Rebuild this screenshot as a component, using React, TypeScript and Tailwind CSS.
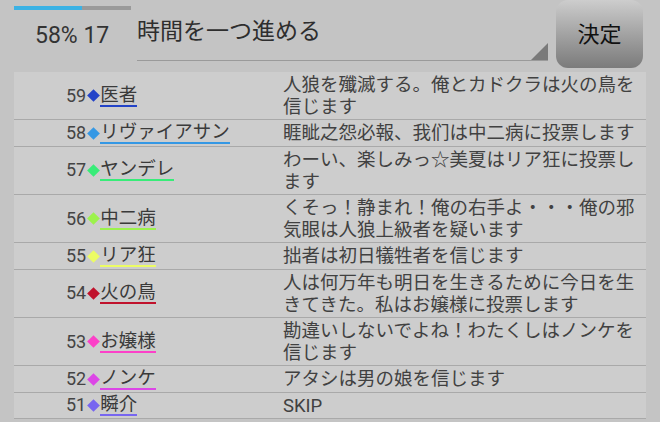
import React from "react";

type Entry = { no: number; name: string; color: string; msg: string };

const entries: Entry[] = [
  { no: 59, name: "医者", color: "#2343c8", msg: "人狼を殲滅する。俺とカドクラは火の鳥を信じます" },
  { no: 58, name: "リヴァイアサン", color: "#3598e4", msg: "睚眦之怨必報、我们は中二病に投票します" },
  { no: 57, name: "ヤンデレ", color: "#38ec78", msg: "わーい、楽しみっ☆美夏はリア狂に投票します" },
  { no: 56, name: "中二病", color: "#9cf24c", msg: "くそっ！静まれ！俺の右手よ・・・俺の邪気眼は人狼上級者を疑います" },
  { no: 55, name: "リア狂", color: "#ecfc64", msg: "拙者は初日犠牲者を信じます" },
  { no: 54, name: "火の鳥", color: "#c0122c", msg: "人は何万年も明日を生きるために今日を生きてきた。私はお嬢様に投票します" },
  { no: 53, name: "お嬢様", color: "#fc40c8", msg: "勘違いしないでよね！わたくしはノンケを信じます" },
  { no: 52, name: "ノンケ", color: "#dc46e6", msg: "アタシは男の娘を信じます" },
  { no: 51, name: "瞬介", color: "#7766f0", msg: "SKIP" },
];

const Row: React.FC<{ e: Entry }> = ({ e }) => (
  <div className="flex border-b border-[#a9a9a9]">
    <div className="w-[269px] shrink-0 flex items-center pl-[52px]">
      <span className="text-[18px] leading-[20px] text-[#444]">{e.no}</span>
      <span
        className="w-[9px] h-[9px] rotate-45 mx-[2.5px] shrink-0"
        style={{ backgroundColor: e.color }}
      />
      <span
        className="text-[18.5px] leading-[20px] text-[#3a3a3a] border-b-2"
        style={{ borderColor: e.color }}
      >
        {e.name}
      </span>
    </div>
    <div className="flex-1 pr-[6px] pt-[2px] pb-[1px] text-[18.5px] leading-[22.2px] text-[#414141]">
      {e.msg}
    </div>
  </div>
);

export default function App() {
  return (
    <div className="w-[660px] h-[422px] overflow-hidden bg-[#c4c4c4] font-['Roboto','Noto_Sans_CJK_JP',sans-serif]">
      <div className="flex h-[72px] pl-[14px]">
        <div className="w-[117px] shrink-0 flex flex-col">
          <div className="mt-[6px] h-[4px] w-full bg-[#9a9a9a] flex">
            <div className="h-full w-[58%] bg-[#3cb2e4]" />
          </div>
          <div className="mt-[12px] pl-[21px] text-[23px] leading-[28px] text-[#333] whitespace-nowrap">
            58% 17
          </div>
        </div>
        <div className="relative ml-[6px] w-[411px] h-[61px] border-b border-[#9a9a9a]">
          <div className="pt-[17px] text-[23px] leading-[30px] text-[#2e2e2e]">時間を一つ進める</div>
          <div className="absolute right-0 bottom-0 w-0 h-0 border-l-[17px] border-l-transparent border-b-[17px] border-b-[#7a7a7a]" />
        </div>
        <button className="ml-[8px] w-[87px] h-[68px] rounded-[12px] bg-linear-to-b from-[#cdcdcd] to-[#7b7b7b] flex items-center justify-center pt-[2px]">
          <span className="text-[22px] leading-[28px] text-[#111]">決定</span>
        </button>
      </div>
      <div className="ml-[14px] w-[632px] bg-[#cdcdcd]">
        {entries.map((e) => (
          <Row key={e.no} e={e} />
        ))}
      </div>
    </div>
  );
}
